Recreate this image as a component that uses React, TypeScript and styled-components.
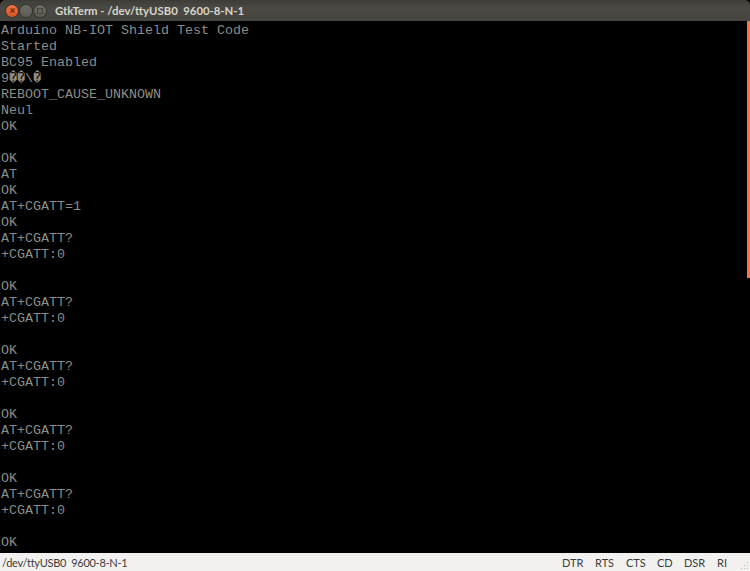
import React from "react";
import styled, { createGlobalStyle } from "styled-components";

const Global = createGlobalStyle`
  html, body { margin: 0; padding: 0; background: #000; overflow: hidden; }
`;

const Window = styled.div`
  width: 750px;
  height: 571px;
  display: flex;
  flex-direction: column;
  background: #000;
  overflow: hidden;
`;

const TitleBar = styled.header`
  height: 21px;
  flex: none;
  display: flex;
  align-items: center;
  padding-left: 6px;
  gap: 2px;
  background: linear-gradient(#3d3c37, #4a4943 35%, #45443e);
  border-radius: 5px 5px 0 0;
`;

const WinButton = styled.span<{ $close?: boolean }>`
  width: 12px;
  height: 12px;
  border-radius: 50%;
  display: flex;
  align-items: center;
  justify-content: center;
  background: ${(p) => (p.$close ? "linear-gradient(#ef7445, #d9531f)" : "linear-gradient(#6d6c65, #5c5b54)")};
  box-shadow: 0 0 0 1px #37362f;
`;

const Title = styled.span`
  margin-left: 7px;
  font: 700 11.35px Lato, "Noto Sans", sans-serif;
  color: #d8d4ca;
  white-space: pre;
`;

const TermArea = styled.main`
  flex: 1;
  min-height: 0;
  display: flex;
  background: #000;
`;

const Output = styled.pre`
  flex: 1;
  margin: 0;
  padding: 2px 0 0 1px;
  font: 13.33px/16px "Liberation Mono", "DejaVu Sans Mono", monospace;
  color: #8c8c8a;
  overflow: hidden;
`;

const ScrollTrack = styled.div`
  width: 3px;
  flex: none;
`;

const ScrollThumb = styled.div`
  height: 257px;
  background: #f07746;
`;

const StatusWrap = styled.div`
  position: relative;
`;

const StatusBar = styled.footer`
  height: 18px;
  flex: none;
  display: flex;
  align-items: center;
  justify-content: space-between;
  background: #f2f1ef;
  font: 11px Lato, "Noto Sans", sans-serif;
  color: #3c3c3c;
  padding: 0 0 0 2px;
`;

const PortLabel = styled.span`
  white-space: pre;
  letter-spacing: -0.28px;
`;

const Signals = styled.div`
  display: flex;
  align-items: center;
  padding-right: 23px;
`;

const Signal = styled.span<{ $w: number }>`
  width: ${(p) => p.$w}px;
`;

const Grip = styled.svg`
  position: absolute;
  right: 1px;
  bottom: 1px;
`;

const lines = `Arduino NB-IOT Shield Test Code
Started
BC95 Enabled
9\uFFFD\uFFFD\\\uFFFD
REBOOT_CAUSE_UNKNOWN
Neul
OK

OK
AT
OK
AT+CGATT=1
OK
AT+CGATT?
+CGATT:0

OK
AT+CGATT?
+CGATT:0

OK
AT+CGATT?
+CGATT:0

OK
AT+CGATT?
+CGATT:0

OK
AT+CGATT?
+CGATT:0

OK`;

const signals: [string, number][] = [
  ["DTR", 33],
  ["RTS", 31],
  ["CTS", 31],
  ["CD", 27],
  ["DSR", 33],
  ["RI", 10],
];

export default function App() {
  return (
    <Window>
      <Global />
      <TitleBar>
        <WinButton $close>
          <svg width="7" height="7" viewBox="0 0 7 7">
            <path d="M1.5 1.5l4 4M5.5 1.5l-4 4" stroke="#6e2c12" strokeWidth="1.3" />
          </svg>
        </WinButton>
        <WinButton />
        <WinButton>
          <svg width="6" height="6" viewBox="0 0 6 6">
            <rect x="0.5" y="0.5" width="5" height="5" fill="none" stroke="#45443e" />
          </svg>
        </WinButton>
        <Title>GtkTerm - /dev/ttyUSB0  9600-8-N-1</Title>
      </TitleBar>
      <TermArea>
        <Output>{lines}</Output>
        <ScrollTrack>
          <ScrollThumb />
        </ScrollTrack>
      </TermArea>
      <StatusWrap>
        <StatusBar>
          <PortLabel>/dev/ttyUSB0  9600-8-N-1</PortLabel>
          <Signals>
            {signals.map(([label, w]) => (
              <Signal key={label} $w={w}>{label}</Signal>
            ))}
          </Signals>
        </StatusBar>
        <Grip width="10" height="10" viewBox="0 0 10 10" fill="#bdbcb9">
          <rect x="8" y="8" width="1" height="1" />
          <rect x="5" y="8" width="1" height="1" />
          <rect x="2" y="8" width="1" height="1" />
          <rect x="8" y="5" width="1" height="1" />
          <rect x="5" y="5" width="1" height="1" />
          <rect x="8" y="2" width="1" height="1" />
        </Grip>
      </StatusWrap>
    </Window>
  );
}
